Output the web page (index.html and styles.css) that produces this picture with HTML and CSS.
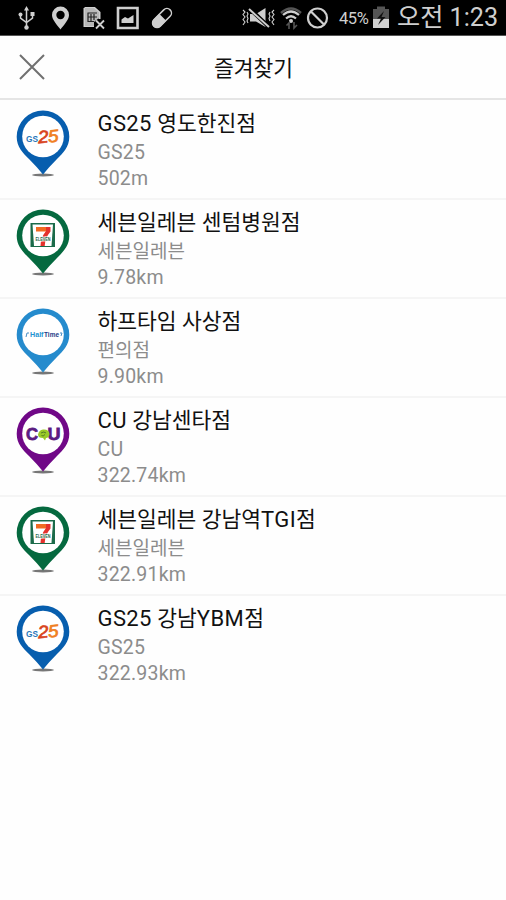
FILE: index.html
```html
<!DOCTYPE html>
<html lang="ko">
<head>
<meta charset="utf-8">
<title>즐겨찾기</title>
<link rel="stylesheet" href="styles.css">
</head>
<body>
<svg class="defs" width="0" height="0" aria-hidden="true">
  <defs>
    <g id="pin">
      <ellipse cx="28" cy="65" rx="11" ry="1.4" fill="#777"/>
      <path d="M28 .5A26.3 26.3 0 0 0 1.7 26.8C1.7 37 8 43 14 49Q22 57 28 64.500Q34 57 42 49C48 43 54.300 37 54.300 26.800A26.300 26.300 0 0 0 28 .5Z" fill="currentColor"/>
      <circle cx="28" cy="26.500" r="20.800" fill="#fff"/>
    </g>
    <g id="gs25">
      <text x="11" y="32" font-size="9.500" font-weight="700" fill="#2876b9" textLength="12" lengthAdjust="spacingAndGlyphs">GS</text>
      <g font-size="17.500" font-weight="400" font-style="italic" stroke-width=".7" transform="rotate(-5 33 28) translate(0 -.5)">
        <text x="23" y="33" fill="#d9441d" stroke="#d9441d" textLength="10.500" lengthAdjust="spacingAndGlyphs">2</text>
        <text x="33" y="33" fill="#f07f23" stroke="#f07f23" textLength="10.500" lengthAdjust="spacingAndGlyphs">5</text>
      </g>
    </g>
    <g id="seven">
      <path d="M15.500 14H40V38H15.500Z" fill="#1b6b4a"/>
      <path d="M17.500 15.500H38L36.500 37H19Z" fill="#fff"/>
      <path d="M21 18H35V22.500H21Z" fill="#f26b21"/>
      <path d="M31 18H35.500V22.500Q30 29 29.700 37H25.500Q25.500 29 31 22Z" fill="#e5322d"/>
      <text x="20.500" y="31.500" font-size="5.500" font-weight="700" fill="#17664a" stroke="#fff" stroke-width="1.200" paint-order="stroke" textLength="15" lengthAdjust="spacingAndGlyphs">ELEVEN</text>
    </g>
  </defs>
</svg>
<header class="status">
  <svg class="status-left" width="190" height="35" viewBox="0 0 190 35" fill="none" stroke="#cfcfcf" stroke-width="1.500">
    <path d="M26.500 8V28M20.500 13V18L26.500 22.500L32.500 18V13"/>
    <path d="M24 10.500L26.500 6L29 10.500Z" fill="#cfcfcf" stroke="none"/>
    <g fill="#cfcfcf" stroke="none"><circle cx="20.500" cy="14.500" r="2"/><path d="M30.500 12H34.500V16H30.500Z"/><circle cx="26.500" cy="27.500" r="2.200"/></g>
    <path fill="#cfcfcf" stroke="none" fill-rule="evenodd" d="M60.500 6.500A8.500 8.500 0 0 0 52 15C52 20 58 26 60.500 29.500C63 26 69 20 69 15A8.500 8.500 0 0 0 60.500 6.500ZM60.500 10.800A4.200 4.200 0 1 1 60.500 19.200A4.200 4.200 0 1 1 60.500 10.800Z"/>
    <path d="M84.500 8H94.500L99.500 12.500V19M84.500 8V26H94" stroke-width="2"/>
    <path d="M85 8H94L99 13V18L94 22V26H85Z" fill="#b8b8b8" stroke="none"/>
    <path d="M87.500 13H97M88 13V21.500H94M91 14V21M94 14V20M88 17H97" stroke="#222" stroke-width="1.200"/>
    <path d="M96 20.500L104 28.500M104 20.500L96 28.500" stroke-width="1.800"/>
    <path d="M118 8H137.500V28H118Z" stroke-width="2.600"/>
    <path d="M121.500 23V19.500L125 17L128 18.500L133.500 15V23Z" fill="#cfcfcf" stroke="none"/>
    <g transform="rotate(-45 162 18)">
      <path d="M155 13.500H169A4.500 4.500 0 0 1 169 22.500H155A4.500 4.500 0 0 1 155 13.500Z"/>
      <path d="M163 13H155A5 5 0 0 0 155 23H163Z" fill="#cfcfcf" stroke="none"/>
    </g>
  </svg>
  <svg class="status-right" width="99" height="35" viewBox="240 0 99 35" fill="none" stroke="#cfcfcf" stroke-width="1.600">
    <path d="M250 14H256L265.500 8V27L256 21.500H250Z" fill="#cfcfcf" stroke="none"/>
    <path d="M249 8L269 27" stroke="#000" stroke-width="4"/>
    <path d="M249 9L269 27" stroke-width="2"/>
    <path d="M243 10L245 12L243 14.500L245 17L243 19.500L245 22L243 25M247 12L248 14L247 16L248 18.500L247 21L248 23M274 10L272 12L274 14.500L272 17L274 19.500L272 22L274 25M270 12L269 14L270 16L269 18.500L270 21" stroke-width="1.100"/>
    <path d="M281 13Q291 4 301 13" stroke="#555" stroke-width="2.500"/>
    <path d="M283 15Q291 8 299 15M286 18.500Q291 14 296 18.500" stroke-width="2.200"/>
    <circle cx="291" cy="21" r="2" fill="#cfcfcf" stroke="none"/>
    <path d="M289 29V23L286.500 25.500M294 22V28L297 25" stroke="#555"/>
    <circle cx="317.500" cy="18" r="9.500" stroke-width="2.200"/>
    <path d="M311 11.500L324 24.500" stroke-width="2.200"/>
  </svg>
  <span class="percent">45%</span>
  <svg class="battery" width="18" height="35" viewBox="0 0 18 35">
    <path d="M1 9H5V6.500H13V9H17V28H1Z" fill="#555"/>
    <path d="M1 19H17V28H1Z" fill="#d0d0d0"/>
    <path d="M12 11L5 18.500H9L6 25L13.500 17H9.500Z" fill="#111"/>
  </svg>
  <span class="clock">오전 1:23</span>
</header>
<nav class="bar">
  <svg class="close" width="26" height="26" viewBox="0 0 26 26" fill="none" stroke="#707070" stroke-width="2"><path d="M1 1L25 25M25 1L1 25"/></svg>
  <h1 class="heading">즐겨찾기</h1>
</nav>
<ul class="list">
  <li class="row">
    <svg class="marker gs" viewBox="0 0 56 68"><use href="#pin"/><use href="#gs25"/></svg>
    <div class="info"><h2 class="name"><span class="latin">GS25</span> 영도한진점</h2><p class="meta latin">GS25</p><p class="meta latin">502m</p></div>
  </li>
  <li class="row">
    <svg class="marker sv" viewBox="0 0 56 68"><use href="#pin"/><use href="#seven"/></svg>
    <div class="info"><h2 class="name">세븐일레븐 센텀병원점</h2><p class="meta">세븐일레븐</p><p class="meta latin">9.78km</p></div>
  </li>
  <li class="row">
    <svg class="marker ht" viewBox="0 0 56 68"><use href="#pin"/>
      <path d="M11 29L12 25H14M45 25H47L46 28" fill="none" stroke="#478ec5"/>
      <g font-size="7" font-weight="700"><text x="15" y="29" fill="#2494d1" textLength="13.500" lengthAdjust="spacingAndGlyphs">Half</text><text x="29" y="29" fill="#243c86" textLength="15" lengthAdjust="spacingAndGlyphs">Time</text></g>
    </svg>
    <div class="info"><h2 class="name">하프타임 사상점</h2><p class="meta">편의점</p><p class="meta latin">9.90km</p></div>
  </li>
  <li class="row">
    <svg class="marker cu" viewBox="0 0 56 68"><use href="#pin"/>
      <g font-size="17" font-weight="700" fill="#5b1d82" stroke="#5b1d82" stroke-width=".8"><text x="11" y="32.500" textLength="12" lengthAdjust="spacingAndGlyphs">C</text><text x="32.500" y="32.500" textLength="13" lengthAdjust="spacingAndGlyphs">U</text></g>
      <path d="M28 22.500Q34 22 34.500 27Q34 31 31 31L30 33.500L28 31Q23 31 23 27.500Q24 23 28 22.500Z" fill="#9aca28"/>
      <path d="M26 26Q29 24 31 26M30 27.500Q28 30 26.500 28.500" fill="none" stroke="#527c25"/>
    </svg>
    <div class="info"><h2 class="name"><span class="latin">CU</span> 강남센타점</h2><p class="meta latin">CU</p><p class="meta latin">322.74km</p></div>
  </li>
  <li class="row">
    <svg class="marker sv" viewBox="0 0 56 68"><use href="#pin"/><use href="#seven"/></svg>
    <div class="info"><h2 class="name">세븐일레븐 강남역<span class="latin">TGI</span>점</h2><p class="meta">세븐일레븐</p><p class="meta latin">322.91km</p></div>
  </li>
  <li class="row">
    <svg class="marker gs" viewBox="0 0 56 68"><use href="#pin"/><use href="#gs25"/></svg>
    <div class="info"><h2 class="name"><span class="latin">GS25</span> 강남<span class="latin">YBM</span>점</h2><p class="meta latin">GS25</p><p class="meta latin">322.93km</p></div>
  </li>
</ul>
</body>
</html>
```
FILE: styles.css
```css
* { box-sizing: border-box; margin: 0; padding: 0; }
body {
  width: 506px;
  height: 900px;
  overflow: hidden;
  background: #fefefe;
  font-family: Roboto, "Noto Sans CJK KR", sans-serif;
}
.defs { display: none; }
svg { display: block; flex: none; }
.status {
  display: flex;
  align-items: center;
  height: 36px;
  background: #000;
  border-bottom: 1px solid #555;
  color: #cfcfcf;
  white-space: nowrap;
}
.status-right { margin-left: 50px; }
.percent { width: 33px; font-size: 16.5px; letter-spacing: -.4px; padding-top: 2px; }
.battery { width: 18px; }
.clock { margin-left: 7px; font-size: 25.2px; line-height: 35px; }
.bar {
  display: grid;
  grid-template-columns: 100px 1fr 100px;
  align-items: center;
  height: 64px;
  border-bottom: 2px solid #e5e5e5;
}
.close { margin-left: 19px; }
.heading { font-size: 21.5px; font-weight: 400; line-height: 32px; padding: 3px 0 0 1px; text-align: center; color: #111; }
.list { list-style: none; padding-top: .5px; }
.row {
  display: flex;
  height: 99.1px;
  padding: 9.5px 0 0 15px;
  border-bottom: 2px solid #f5f5f5;
}
.row:last-child { border-bottom: 0; }
.marker { width: 56px; height: 68px; font-family: "Liberation Sans", sans-serif; }
.gs { color: #075eae; }
.sv { color: #05693f; }
.ht { color: #258bcd; }
.cu { color: #700887; }
.info { margin-left: 26.5px; white-space: nowrap; }
.name { font-size: 21.5px; font-weight: 400; line-height: 28px; color: #111; }
.name .latin { font-size: 22px; letter-spacing: .4px; }
.meta { font-size: 19px; line-height: 26.5px; color: #8c8c8c; }
.meta:nth-child(2) { padding-top: 1.5px; }
.meta.latin { font-size: 19.5px; letter-spacing: .2px; }
```
